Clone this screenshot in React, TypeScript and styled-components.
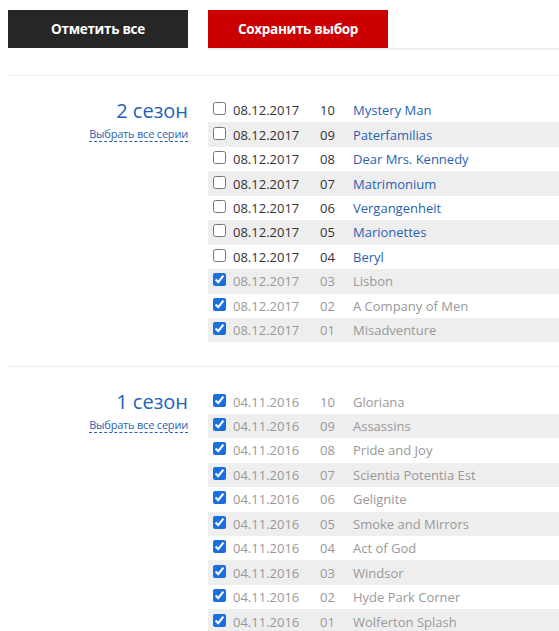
import React, { useState } from "react"
import styled, { createGlobalStyle } from "styled-components"

interface Episode {
  date: string
  num: string
  title: string
  watched: boolean
}

interface Season {
  name: string
  episodes: Episode[]
}

const seasons: Season[] = [
  {
    name: "2 сезон",
    episodes: [
      { date: "08.12.2017", num: "10", title: "Mystery Man", watched: false },
      { date: "08.12.2017", num: "09", title: "Paterfamilias", watched: false },
      { date: "08.12.2017", num: "08", title: "Dear Mrs. Kennedy", watched: false },
      { date: "08.12.2017", num: "07", title: "Matrimonium", watched: false },
      { date: "08.12.2017", num: "06", title: "Vergangenheit", watched: false },
      { date: "08.12.2017", num: "05", title: "Marionettes", watched: false },
      { date: "08.12.2017", num: "04", title: "Beryl", watched: false },
      { date: "08.12.2017", num: "03", title: "Lisbon", watched: true },
      { date: "08.12.2017", num: "02", title: "A Company of Men", watched: true },
      { date: "08.12.2017", num: "01", title: "Misadventure", watched: true },
    ],
  },
  {
    name: "1 сезон",
    episodes: [
      { date: "04.11.2016", num: "10", title: "Gloriana", watched: true },
      { date: "04.11.2016", num: "09", title: "Assassins", watched: true },
      { date: "04.11.2016", num: "08", title: "Pride and Joy", watched: true },
      { date: "04.11.2016", num: "07", title: "Scientia Potentia Est", watched: true },
      { date: "04.11.2016", num: "06", title: "Gelignite", watched: true },
      { date: "04.11.2016", num: "05", title: "Smoke and Mirrors", watched: true },
      { date: "04.11.2016", num: "04", title: "Act of God", watched: true },
      { date: "04.11.2016", num: "03", title: "Windsor", watched: true },
      { date: "04.11.2016", num: "02", title: "Hyde Park Corner", watched: true },
      { date: "04.11.2016", num: "01", title: "Wolferton Splash", watched: true },
    ],
  },
]

export default function App() {
  const [data, setData] = useState(seasons)

  const toggle = (s: number, e: number) =>
    setData(prev =>
      prev.map((season, si) =>
        si !== s
          ? season
          : {
              ...season,
              episodes: season.episodes.map((ep, ei) =>
                ei === e ? { ...ep, watched: !ep.watched } : ep
              ),
            }
      )
    )

  const markSeason = (s: number) =>
    setData(prev =>
      prev.map((season, si) =>
        si !== s
          ? season
          : { ...season, episodes: season.episodes.map(ep => ({ ...ep, watched: true })) }
      )
    )

  const markAll = () =>
    setData(prev =>
      prev.map(season => ({
        ...season,
        episodes: season.episodes.map(ep => ({ ...ep, watched: true })),
      }))
    )

  return (
    <Root>
      <GlobalStyle />
      <Toolbar>
        <Button $variant="dark" onClick={markAll}>
          Отметить все
        </Button>
        <SaveTab>
          <Button $variant="red">Сохранить выбор</Button>
        </SaveTab>
      </Toolbar>
      {data.map((season, si) => (
        <SeasonBlock key={season.name}>
          <SeasonSide>
            <SeasonTitle>{season.name}</SeasonTitle>
            <SelectAll onClick={() => markSeason(si)}>Выбрать все серии</SelectAll>
          </SeasonSide>
          <EpisodeList>
            {season.episodes.map((ep, ei) => (
              <EpisodeRow key={ep.num} $striped={ei % 2 === 1} $watched={ep.watched}>
                <Check
                  type="checkbox"
                  checked={ep.watched}
                  onChange={() => toggle(si, ei)}
                />
                <DateCell>{ep.date}</DateCell>
                <NumCell>{ep.num}</NumCell>
                <TitleCell $watched={ep.watched}>{ep.title}</TitleCell>
              </EpisodeRow>
            ))}
          </EpisodeList>
        </SeasonBlock>
      ))}
    </Root>
  )
}

const GlobalStyle = createGlobalStyle`
  body {
    margin: 0;
    background: #fff;
    font-family: "Open Sans", "Noto Sans", sans-serif;
    overflow: hidden;
  }
`

const Root = styled.div`
  padding: 10px 0 0 8px;
`

const Toolbar = styled.div`
  display: flex;
  gap: 20px;
  margin-bottom: 25px;
`

const SaveTab = styled.div`
  flex: 1;
  display: flex;
  border-bottom: 2px solid #eeeeee;
`

const Button = styled.button<{ $variant: "dark" | "red" }>`
  width: 180px;
  height: 38px;
  border: none;
  padding: 0;
  cursor: pointer;
  color: #fff;
  font-family: "Open Sans", sans-serif;
  font-weight: 700;
  font-size: 13.5px;
  letter-spacing: -0.3px;
  background: ${p => (p.$variant === "dark" ? "#262626" : "#cc0000")};
`

const SeasonBlock = styled.section`
  display: flex;
  gap: 20px;
  border-top: 1px solid #eeeeee;
  padding: 22px 0 24px;
`

const SeasonSide = styled.div`
  width: 180px;
  flex-shrink: 0;
  display: flex;
  flex-direction: column;
  align-items: flex-end;
`

const SeasonTitle = styled.div`
  font-size: 20px;
  line-height: 26px;
  color: #2262bd;
`

const SelectAll = styled.span`
  margin-top: 2px;
  font-size: 11px;
  letter-spacing: -0.2px;
  line-height: 15px;
  color: #2a5fb0;
  border-bottom: 1px dashed #2a5fb0;
  cursor: pointer;
`

const EpisodeList = styled.div`
  flex: 1;
  min-width: 0;
  display: flex;
  flex-direction: column;
`

const EpisodeRow = styled.label<{ $striped: boolean; $watched: boolean }>`
  display: flex;
  align-items: center;
  height: 24.44px;
  padding-left: 5px;
  font-size: 13px;
  color: ${p => (p.$watched ? "#999999" : "#333333")};
  background: ${p => (p.$striped ? "#eeeeee" : "transparent")};
`

const Check = styled.input`
  width: 13px;
  height: 13px;
  margin: -3px 7px 0 0;
  accent-color: #1a6fe0;
`

const DateCell = styled.span`
  width: 87px;
`

const NumCell = styled.span`
  width: 33px;
`

const TitleCell = styled.span<{ $watched: boolean }>`
  color: ${p => (p.$watched ? "#999999" : "#2a5fb0")};
`
